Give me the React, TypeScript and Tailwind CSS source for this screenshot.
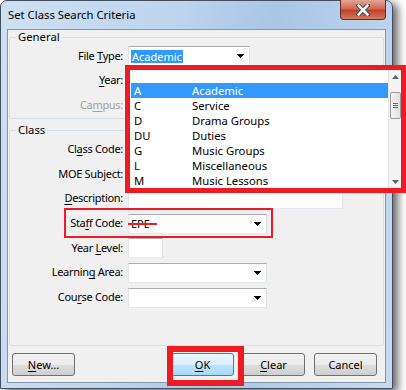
import React from "react";

const FONT = "font-['Segoe_UI','Noto_Sans',sans-serif]";

const LIST_ITEMS = [
  { code: "A", name: "Academic" },
  { code: "C", name: "Service" },
  { code: "D", name: "Drama Groups" },
  { code: "DU", name: "Duties" },
  { code: "G", name: "Music Groups" },
  { code: "L", name: "Miscellaneous" },
  { code: "M", name: "Music Lessons" },
];

// underline for accelerator letter
function U({ c }: { c: string }) {
  return <span className="underline decoration-1 underline-offset-[2px]">{c}</span>;
}

function Arrow() {
  return (
    <svg width="7" height="4" viewBox="0 0 7 4" shapeRendering="crispEdges">
      <path d="M0 0h7v1h-1v1h-1v1h-1v1h-1v-1h-1v-1h-1v-1h-1z" fill="#000" />
    </svg>
  );
}

function Combo({ className, children }: { className: string; children?: React.ReactNode }) {
  return (
    <div
      className={`relative flex items-center bg-white border border-[#abadb3] border-l-[#e2e3ea] border-r-[#dbdfe6] border-b-[#e3e9ef] ${className}`}
    >
      <div className="flex-1 pl-[2px] flex items-center">{children}</div>
      <div className="w-[17px] flex justify-center">
        <Arrow />
      </div>
    </div>
  );
}

function TextBox({ className }: { className: string }) {
  return (
    <div
      className={`bg-white border border-[#abadb3] border-l-[#e2e3ea] border-r-[#dbdfe6] border-b-[#e3e9ef] ${className}`}
    />
  );
}

function Row({
  h,
  label,
  disabled,
  children,
}: {
  h: string;
  label: React.ReactNode;
  disabled?: boolean;
  children?: React.ReactNode;
}) {
  return (
    <div className={`flex items-center ${h}`}>
      <div
        className={`w-[114px] pr-[1px] text-right tracking-[-0.3px] ${disabled ? "text-[#a0a0a0]" : "text-black"}`}
      >
        {label}
      </div>
      <div className="ml-[4px] flex items-center">{children}</div>
    </div>
  );
}

function Button({ children, def }: { children: React.ReactNode; def?: boolean }) {
  return (
    <div
      className={`w-[63px] h-[23px] rounded-[3px] border flex items-center justify-center ${
        def
          ? "border-[#3c7fb1] bg-[linear-gradient(#eaf6fd_0%,#d9f0fc_50%,#bee6fd_51%,#a7d9f5_100%)]"
          : "border-[#707070] bg-[linear-gradient(#f2f2f2_0%,#ebebeb_50%,#dddddd_51%,#cfcfcf_100%)]"
      }`}
    >
      <span className="leading-none">{children}</span>
    </div>
  );
}

function CloseButton() {
  return (
    <div className="absolute right-[6px] top-[-1px] w-[46px] h-[20px] rounded-b-[4px] border border-[#6b2a20] border-t-0 bg-[linear-gradient(#e7a595_0%,#cf6a55_45%,#c2402a_55%,#d57a5e_100%)] flex items-center justify-center">
      <svg width="14" height="12" viewBox="0 0 14 12">
        <path
          d="M2.5 1.5 L11.5 10.5 M11.5 1.5 L2.5 10.5"
          stroke="#3d3d3d"
          strokeWidth="4.4"
          strokeLinecap="square"
          fill="none"
        />
        <path d="M2.5 1.5 L11.5 10.5 M11.5 1.5 L2.5 10.5" stroke="#ffffff" strokeWidth="2.6" strokeLinecap="square" />
      </svg>
    </div>
  );
}

export default function App() {
  return (
    <div className={`w-[406px] h-[390px] bg-white overflow-hidden text-[11px] ${FONT}`}>
      <div className="relative w-[393px] h-[389px] rounded-t-[7px] border border-[#414f60] bg-[linear-gradient(100deg,#cfe0f2_0%,#bcd4ed_40%,#a9c6e6_60%,#c6dbf0_100%)] shadow-[5px_3px_8px_rgba(0,0,0,0.6)] flex flex-col">
        {/* title bar */}
        <div className="h-[28px] flex items-center pl-[7px] pt-[1px]">
          <span className="text-[11.3px] text-black">Set Class Search Criteria</span>
        </div>
        <CloseButton />

        {/* client area */}
        <div className="ml-[6px] w-[379px] h-[354px] bg-[#f0f0f0] border border-[#8397ab] flex flex-col">
          {/* General */}
          <fieldset className="ml-[1px] w-[375px] border border-[#d5dfe5] rounded-[2px]">
            <legend className="ml-[6px] px-[2px] leading-[14px] text-[11.3px]">General</legend>
            <Row h="h-[24px]" label={<>File <U c="T" />ype:</>}>
              <Combo className="w-[122px] h-[21px]">
                <span className="bg-[#3399ff] text-white leading-[13px] px-[1px]">Academic</span>
              </Combo>
            </Row>
            <Row h="h-[25px]" label={<><U c="Y" />ear:</>}>
              <Combo className="w-[122px] h-[21px]" />
            </Row>
            <Row h="h-[25px]" disabled label={<>Ca<U c="m" />pus:</>}>
              <Combo className="w-[122px] h-[21px]" />
            </Row>
          </fieldset>

          {/* Class */}
          <fieldset className="ml-[1px] mt-[4px] w-[375px] h-[223px] border border-[#d5dfe5] rounded-[2px]">
            <legend className="ml-[6px] px-[2px] leading-[14px] text-[11.3px]">Class</legend>
            <Row h="h-[25px]" label={<>Cl<U c="a" />ss Code:</>}>
              <Combo className="w-[139px] h-[20px]" />
            </Row>
            <Row h="h-[24px]" label="MOE Subject:">
              <Combo className="w-[139px] h-[20px]" />
            </Row>
            <Row h="h-[25px]" label={<><U c="D" />escription:</>}>
              <TextBox className="w-[215px] h-[20px]" />
            </Row>
            <Row h="h-[25px]" label={<>Sta<U c="f" />f Code:</>}>
              <Combo className="w-[139px] h-[20px]">
                <span className="leading-none">EPE</span>
                <span className="absolute left-[-1px] top-[8px] w-[29px] h-[2px] bg-[#ed1c24]" />
              </Combo>
            </Row>
            <Row h="h-[24px]" label={<>Year <U c="L" />evel:</>}>
              <TextBox className="w-[35px] h-[20px]" />
            </Row>
            <Row h="h-[25px]" label={<>Learnin<U c="g" /> Area:</>}>
              <Combo className="w-[139px] h-[20px]" />
            </Row>
            <Row h="h-[25px]" label={<>Cou<U c="r" />se Code:</>}>
              <Combo className="w-[139px] h-[20px]" />
            </Row>
          </fieldset>

          {/* buttons */}
          <div className="mt-[7px] flex items-center pl-[4px] pr-[8px]">
            <Button>
              <U c="N" />ew…
            </Button>
            <div className="flex-1" />
            <Button def>
              <U c="O" />K
            </Button>
            <div className="ml-[8px]">
              <Button>
                <U c="C" />lear
              </Button>
            </div>
            <div className="ml-[9px]">
              <Button>Cancel</Button>
            </div>
          </div>
        </div>

        {/* dropdown list popup with annotation border */}
        <div className="absolute left-[124px] top-[64px] w-[281px] h-[128px] border-[5px] border-[#ed1c24] bg-white flex overflow-hidden text-[11.3px]">
          <div className="flex-1 flex flex-col">
            <div className="h-[14px]" />
            {LIST_ITEMS.map((it, i) => (
              <div
                key={it.code}
                className={`h-[15px] flex items-center ml-[1px] pl-[3px] pt-[1px] ${i === 0 ? "bg-[#3399ff] text-white" : "text-black"}`}
              >
                <span className="w-[58px]">{it.code}</span>
                <span>{it.name}</span>
              </div>
            ))}
          </div>
          <div className="w-[13px] border-l border-[#e3e3e3] bg-[#f4f4f4] flex flex-col items-center">
            <div className="h-[14px] flex items-center justify-center">
              <svg width="7" height="4" viewBox="0 0 7 4">
                <path d="M3.5 0L7 4H0z" fill="#606060" />
              </svg>
            </div>
            <div className="mt-[8px] w-[11px] h-[27px] rounded-[2px] border border-[#9b9b9b] bg-[linear-gradient(90deg,#f3f3f3,#e2e2e2)] flex flex-col items-center justify-center gap-[1px]">
              <div className="w-[5px] h-[1px] bg-[#666]" />
              <div className="w-[5px] h-[1px] bg-[#666]" />
              <div className="w-[5px] h-[1px] bg-[#666]" />
            </div>
            <div className="flex-1" />
            <div className="h-[12px] flex items-center justify-center">
              <svg width="7" height="4" viewBox="0 0 7 4">
                <path d="M0 0H7L3.5 4z" fill="#606060" />
              </svg>
            </div>
          </div>
        </div>

        {/* annotation around staff code */}
        <div className="absolute left-[63px] top-[207px] w-[209px] h-[30px] border-2 border-[#ed1c24]" />

        {/* annotation around OK */}
        <div className="absolute left-[166px] top-[345px] w-[77px] h-[40px] border-[6px] border-[#ed1c24]" />
      </div>
    </div>
  );
}
